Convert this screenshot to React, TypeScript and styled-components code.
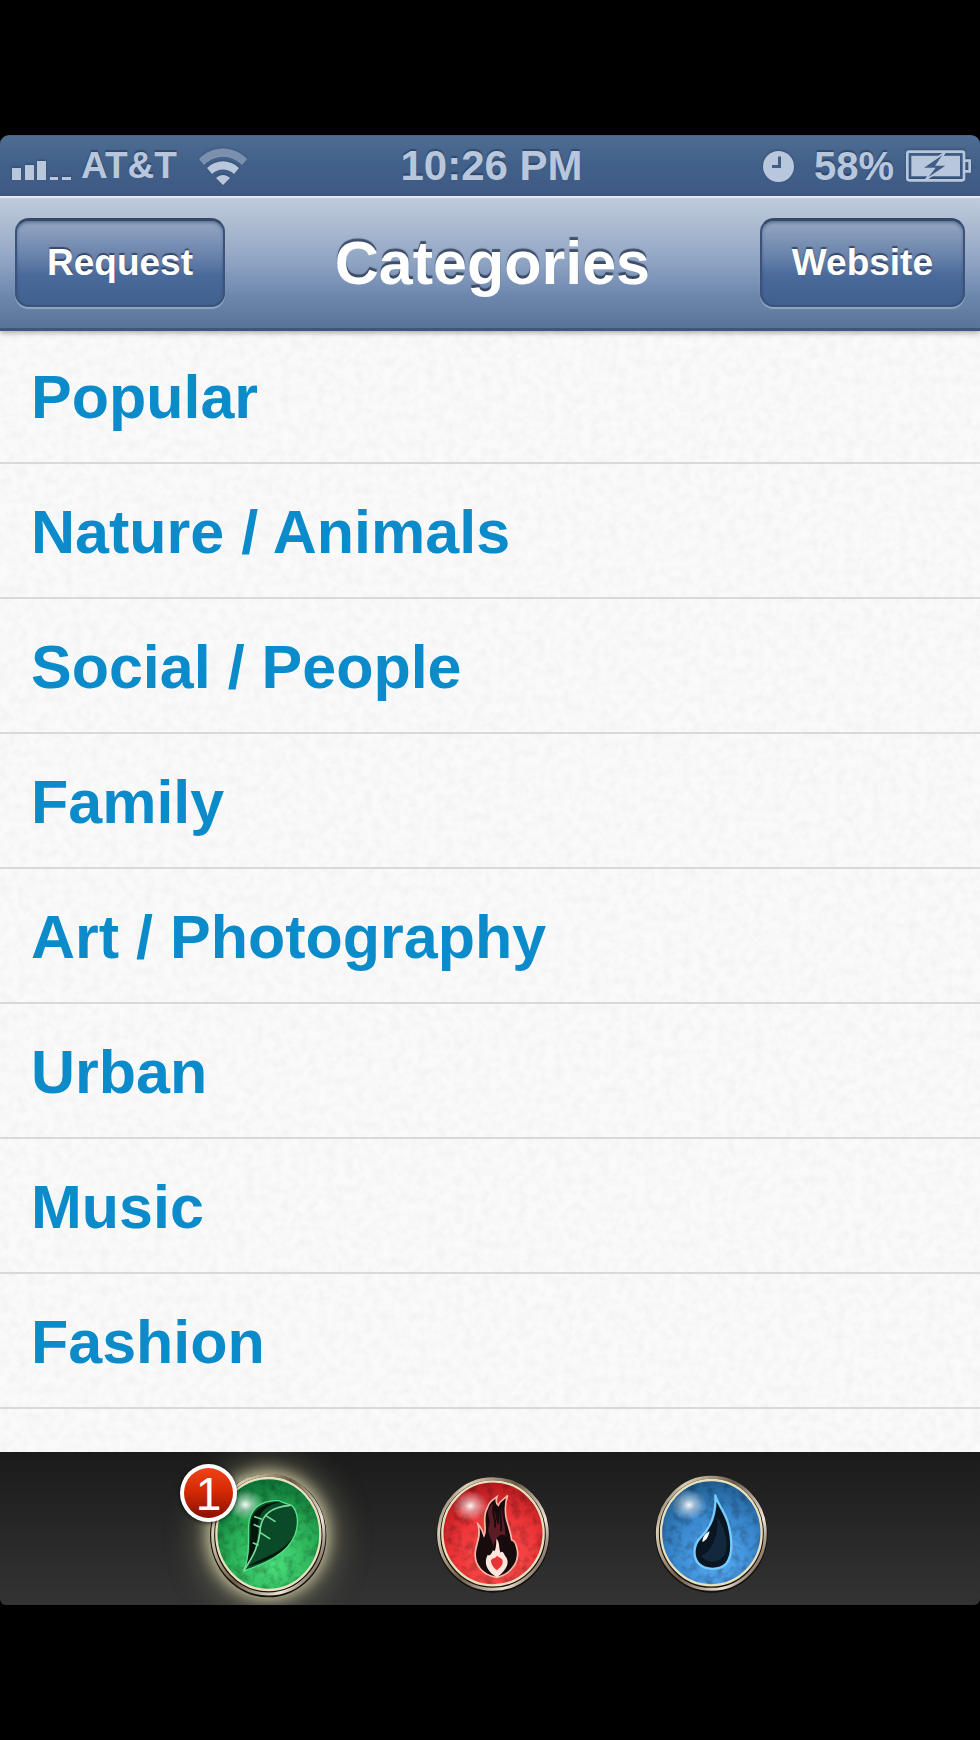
import React from "react";
import styled, { createGlobalStyle, css } from "styled-components";

const GlobalStyle = createGlobalStyle`
  * { box-sizing: border-box; }
  body {
    margin: 0;
    background: #000;
    font-family: "Liberation Sans", Arial, Helvetica, sans-serif;
  }
`;

const Page = styled.div`
  display: flex;
  flex-direction: column;
  min-height: 100vh;
  padding: 135px 0;
  background: #000;
`;

const StatusBar = styled.header`
  display: grid;
  grid-template-columns: 1fr auto 1fr;
  align-items: center;
  height: 61px;
  padding: 0 9px 0 12px;
  border-radius: 9px 9px 0 0;
  border-top: 1px solid #45678f;
  background: linear-gradient(#4f6d92, #416089 50%, #3f5a84);
  color: #b9c7dd;
  font-weight: bold;
  text-shadow: 0 -2px 1px rgba(30, 50, 85, 0.55);
`;

const StatusGroup = styled.div<{ $end?: boolean }>`
  display: flex;
  align-items: center;
  justify-content: ${(p) => (p.$end ? "flex-end" : "flex-start")};
  gap: ${(p) => (p.$end ? "12px" : "10px")};
  line-height: 44px;
`;

const Carrier = styled.span`
  margin-right: 12px;
  font-size: 37px;
`;

const Time = styled.time`
  font-size: 42px;
  line-height: 44px;
`;

const Percent = styled.span`
  margin-left: 8px;
  font-size: 40px;
`;

const StatusIcon = styled.svg`
  display: block;
  flex: none;
  overflow: visible;
  filter: drop-shadow(0 -1px 1px rgba(30, 50, 85, 0.5));
`;

const NavBar = styled.div`
  position: relative;
  z-index: 1;
  display: flex;
  align-items: center;
  justify-content: space-between;
  height: 135px;
  padding: 0 15px 1px;
  border-top: 2px solid #e3eaf3;
  border-bottom: 3px solid #3d5680;
  background: linear-gradient(#c0ccde, #abbacf 22%, #8ea3c4 50%, #6c86ac 76%, #5a7499);
  box-shadow: 0 2px 5px rgba(0, 0, 0, 0.3);
`;

const NavButton = styled.button`
  height: 89px;
  padding: 0 30px;
  border: 2px solid #3b527a;
  border-top: 3px solid #34486a;
  border-radius: 14px;
  background: linear-gradient(#95a7c3, #6b84ac 40%, #4a6a9b 65%, #40608f);
  box-shadow: inset 0 2px 3px rgba(40, 60, 95, 0.45), 0 2px 1px rgba(190, 208, 230, 0.5);
  color: #fff;
  font: bold 37px/44px "Liberation Sans", Arial, sans-serif;
  text-shadow: 0 -2px 1px rgba(35, 50, 80, 0.75);
`;

const Title = styled.h1`
  margin: 0;
  color: #fff;
  font-size: 61px;
  line-height: 72px;
  text-shadow: 0 -3px 1px rgba(40, 55, 80, 0.8);
`;

const Content = styled.main`
  position: relative;
  flex: 1;
  overflow: hidden;
  background: #fafafa;
`;

const Paper = styled.svg`
  position: absolute;
  inset: 0;
  width: 100%;
  height: 100%;
`;

const List = styled.ul`
  position: relative;
  margin: -2px 0 0;
  padding: 0;
  list-style: none;
`;

const Row = styled.li`
  border-bottom: 2px solid #d9d9d9;
`;

const RowLink = styled.a`
  display: block;
  height: 133px;
  padding: 32px 31px 0;
  color: #0c8bcb;
  font-size: 61px;
  font-weight: bold;
  line-height: 72px;
  text-decoration: none;
  text-shadow: 0 0 2px #fff;
`;

const TabBar = styled.nav`
  display: flex;
  justify-content: center;
  align-items: center;
  gap: 106px;
  height: 153px;
  padding-top: 12px;
  overflow: hidden;
  border-radius: 0 0 6px 6px;
  background: linear-gradient(#1b1b1b, #333);
`;

const TabButton = styled.button<{ $active?: boolean }>`
  position: relative;
  width: 116px;
  height: 122px;
  padding: 0;
  border: 0;
  border-radius: 50%;
  background: none;
  ${(p) =>
    p.$active &&
    css`
      box-shadow: 0 0 14px 3px rgba(225, 220, 175, 0.75), 0 0 32px 10px rgba(180, 180, 140, 0.5);
    `}
`;

const Orb = styled.svg`
  display: block;
  width: 100%;
  height: 100%;
  overflow: visible;
`;

const Badge = styled.span`
  position: absolute;
  top: -10px;
  left: -30px;
  width: 57px;
  height: 58px;
  border: 4px solid #fff;
  border-radius: 50%;
  background: linear-gradient(#ee4419, #d52a05 45%, #8c1000);
  box-shadow: 0 1px 4px rgba(0, 0, 0, 0.7);
  color: #fff;
  font: 46px/52px "Liberation Sans", Arial, sans-serif;
  text-align: center;
`;

const categories = [
  "Popular",
  "Nature / Animals",
  "Social / People",
  "Family",
  "Art / Photography",
  "Urban",
  "Music",
  "Fashion",
];

const SignalIcon = () => (
  <StatusIcon width="59" height="19" viewBox="0 0 59 19" fill="currentColor" role="img" aria-label="Signal">
    <path d="M0 7h9v12H0zM13 4h9v15h-9zM25 0h9v19h-9zM38 16h8v3h-8zM50 16h9v3h-9z" transform="translate(0 4)" />
  </StatusIcon>
);

const WifiIcon = () => (
  <StatusIcon width="48" height="36" viewBox="0 0 48 36" fill="currentColor" role="img" aria-label="Wi-Fi">
    <path d="M0 11C13-3 35-3 48 11l-5 6C32 6 16 6 5 17z" opacity=".5" />
    <path d="M8 20C17 11 31 11 40 20l-5 6c-6-6-16-6-22 0z" />
    <path d="M17 30c4-4 10-4 14 0l-7 7z" />
  </StatusIcon>
);

const ClockIcon = () => (
  <StatusIcon width="31" height="31" viewBox="0 0 62 62" role="img" aria-label="Alarm">
    <circle cx="31" cy="31" r="31" fill="currentColor" />
    <path d="M33 11v20H18" fill="none" stroke="#405d87" strokeWidth="6" />
  </StatusIcon>
);

const BatteryIcon = () => (
  <StatusIcon width="65" height="32" viewBox="0 0 195 96" role="img" aria-label="Battery charging">
    <rect x="4" y="5" width="170" height="86" rx="6" fill="none" stroke="currentColor" strokeWidth="8" />
    <path d="M176 32h15v32h-15" fill="none" stroke="currentColor" strokeWidth="8" />
    <path d="M16 17h146v62H16z" fill="currentColor" />
    <path d="M118 6 46 56h38L56 92l70-47H92z" fill="#405d87" stroke="currentColor" strokeWidth="5" />
  </StatusIcon>
);

type OrbBaseProps = {
  id: string;
  cx: number;
  cy: number;
  rx: number;
  ry: number;
  light: string;
  mid: string;
  dark: string;
};

/* Glass disc with a worn metal rim, shared by the three tabs. */
const OrbBase = ({ id, cx, cy, rx, ry, light, mid, dark }: OrbBaseProps) => (
  <>
    <defs>
      <linearGradient id={`${id}-rim`} x1="0" y1="0.2" x2="1" y2="0.8">
        <stop offset="0" stopColor="#6b6152" />
        <stop offset="0.12" stopColor="#d8ceb5" />
        <stop offset="0.45" stopColor="#6b5a45" />
        <stop offset="0.8" stopColor="#efe4d8" />
        <stop offset="1" stopColor="#59483a" />
      </linearGradient>
      <radialGradient id={`${id}-glass`} cx="0.55" cy="0.75" r="0.75">
        <stop offset="0" stopColor={light} />
        <stop offset="0.6" stopColor={mid} />
        <stop offset="1" stopColor={dark} />
      </radialGradient>
      <radialGradient id={`${id}-shine`}>
        <stop offset="0" stopColor="#fff" stopOpacity="0.95" />
        <stop offset="0.35" stopColor="#fff" stopOpacity="0.5" />
        <stop offset="1" stopColor="#fff" stopOpacity="0" />
      </radialGradient>
      <filter id={`${id}-grain`}>
        <feTurbulence type="fractalNoise" baseFrequency="0.04" numOctaves="3" seed="4" />
        <feColorMatrix values="0 0 0 0 0  0 0 0 0 0  0 0 0 0 0  2 0 0 0 -0.85" />
        <feComposite operator="in" in2="SourceGraphic" />
      </filter>
    </defs>
    <ellipse cx={cx} cy={cy + 3} rx={rx + 1} ry={ry + 1} fill="#15100b" />
    <ellipse cx={cx} cy={cy} rx={rx - 6} ry={ry - 6} fill="none" stroke={`url(#${id}-rim)`} strokeWidth="9" />
    <ellipse cx={cx} cy={cy - 2} rx={rx - 17} ry={ry - 16} fill={`url(#${id}-glass)`} stroke="#e8dfbd" strokeWidth="7" />
    <ellipse cx={cx} cy={cy - 2} rx={rx - 21} ry={ry - 20} filter={`url(#${id}-grain)`} opacity="0.3" />
    <ellipse cx={cx - rx * 0.4} cy={cy - ry * 0.49} rx="54" ry="46" fill={`url(#${id}-shine)`} />
  </>
);

const LeafOrb = () => (
  <Orb viewBox="120 102 348 366" aria-hidden="true">
    <OrbBase id="leaf" cx={295} cy={284} rx={173} ry={184} light="#4be07c" mid="#27ad55" dark="#0b7035" />
    <path
      d="M221 393C240 350 234 304 236 254C239 210 270 179 326 182C343 188 352 193 365 196C386 217 386 254 375 285C351 344 286 370 221 393Z"
      fill="#0a4a28"
      stroke="#5ae08b"
      strokeWidth="4"
    />
    <path d="M229 382C242 330 240 296 242 252C245 216 274 187 331 185C284 199 265 218 265 258C264 305 250 350 229 382Z" fill="#04150c" />
    <path d="M235 379C276 350 328 346 367 293C346 339 292 362 235 379Z" fill="#04150c" />
    <path
      d="M223 389C252 345 266 316 270 275C272 226 300 201 360 196M274 237l-20-7M286 226l29 18M270 262l-17-8M271 278l28 18M264 315l-14-6"
      fill="none"
      stroke="#78dc9a"
      strokeWidth="5"
      strokeLinecap="round"
    />
  </Orb>
);

const FlameOrb = () => (
  <Orb viewBox="36 72 348 366" aria-hidden="true">
    <OrbBase id="flame" cx={219} cy={252} rx={169} ry={172} light="#ff5450" mid="#ec3437" dark="#b0181c" />
    <path
      d="M174 222C184 232 188 246 192 257C203 235 184 205 202 174C207 157 216 151 231 140C226 156 229 162 235 166C240 151 252 149 263 136C254 159 255 181 258 202C265 231 272 244 275 270C285 271 289 284 292 301C298 337 271 374 230 382C188 376 162 345 166 305C169 278 184 261 174 222Z"
      fill="#170b0e"
      stroke="#ffb5a6"
      strokeWidth="5"
    />
    <path
      d="M205 182C213 160 222 154 218 178C234 193 222 211 237 225C241 207 231 180 247 159C243 199 257 224 256 257C237 247 225 270 220 288C212 257 199 250 208 224C213 209 201 198 205 182Z"
      fill="#5c1c26"
    />
    <path d="M222 165C212 198 232 206 224 232M246 160C232 190 250 214 242 244" fill="none" stroke="#170b0e" strokeWidth="6" />
    <path
      d="M203 315C211 320 217 306 219 300C224 310 229 296 229 266C240 275 236 298 242 308C248 298 253 315 258 321C273 345 250 367 231 382C209 369 187 346 203 315Z"
      fill="#ffe5dc"
    />
    <path d="M213 331C218 321 225 328 231 317C237 324 247 322 248 333C249 346 240 353 231 361C220 353 213 344 213 331Z" fill="#e83436" />
  </Orb>
);

const DropOrb = () => (
  <Orb viewBox="42 72 348 366" aria-hidden="true">
    <OrbBase id="drop" cx={214} cy={250} rx={168} ry={174} light="#58aef8" mid="#3886cc" dark="#1f5c8e" />
    <path
      d="M226 136C232 163 255 182 266 226C276 269 281 312 259 341C238 362 198 362 176 341C157 320 160 284 182 262C204 241 230 205 226 136Z"
      fill="#0a1522"
      stroke="#75ccff"
      strokeWidth="7"
      strokeLinejoin="round"
    />
    <path d="M231 202C253 231 265 270 257 309C238 344 196 341 184 315C211 316 240 247 231 202Z" fill="#18324d" opacity="0.65" />
    <path d="M187 276C187 260 197 250 209 244C205 260 200 271 187 276Z" fill="#fff" />
  </Orb>
);

export default function App() {
  return (
    <Page>
      <GlobalStyle />
      <StatusBar>
        <StatusGroup>
          <SignalIcon />
          <Carrier>AT&amp;T</Carrier>
          <WifiIcon />
        </StatusGroup>
        <Time>10:26 PM</Time>
        <StatusGroup $end>
          <ClockIcon />
          <Percent>58%</Percent>
          <BatteryIcon />
        </StatusGroup>
      </StatusBar>
      <NavBar>
        <NavButton type="button">Request</NavButton>
        <Title>Categories</Title>
        <NavButton type="button">Website</NavButton>
      </NavBar>
      <Content>
        <Paper aria-hidden="true">
          <filter id="paper-grain" x="0" y="0" width="100%" height="100%">
            <feTurbulence type="fractalNoise" baseFrequency="0.11" numOctaves="3" seed="8" />
            <feColorMatrix values="0 0 0 0 0.55  0 0 0 0 0.55  0 0 0 0 0.55  0.26 0 0 0 -0.09" />
          </filter>
          <rect width="100%" height="100%" filter="url(#paper-grain)" />
        </Paper>
        <List>
          {categories.map((name) => (
            <Row key={name}>
              <RowLink href="#">{name}</RowLink>
            </Row>
          ))}
        </List>
      </Content>
      <TabBar aria-label="Elements">
        <TabButton type="button" $active aria-label="Leaf, 1 new">
          <LeafOrb />
          <Badge>1</Badge>
        </TabButton>
        <TabButton type="button" aria-label="Flame">
          <FlameOrb />
        </TabButton>
        <TabButton type="button" aria-label="Drop">
          <DropOrb />
        </TabButton>
      </TabBar>
    </Page>
  );
}
